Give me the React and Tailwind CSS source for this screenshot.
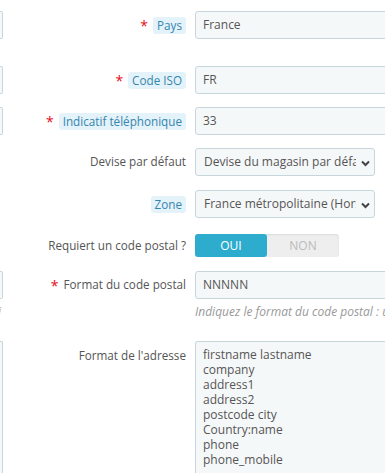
import React from 'react'

const font = { fontFamily: '"Open Sans", "Noto Sans", sans-serif' }

const Stub = ({ tall }) => (
  <div
    className={`w-[3px] shrink-0 self-start border-y border-r border-[#c7d6db] bg-[#f5f8f9] rounded-r-[2px] ${
      tall ? 'h-[200px] border-b-0' : 'h-[28px]'
    }`}
  />
)

const Label = ({ children, required, hint }) => (
  <div className="w-[183px] shrink-0 flex justify-end items-center gap-[5px] text-[11.7px] text-[#555]">
    {required && <span className="text-[#e50b1b] text-[14px] leading-none mt-[2px]">*</span>}
    {hint ? (
      <span className="bg-[#e4f2fa] text-[#3586ae] rounded-[3px] px-[4px] leading-[17px]">{children}</span>
    ) : (
      <span>{children}</span>
    )}
  </div>
)

const Chevron = () => (
  <svg width="9" height="7" viewBox="0 0 9 7" className="absolute right-[4px] top-[11px]">
    <path d="M1 1.5 L4.5 5 L8 1.5" fill="none" stroke="#444" strokeWidth="2" />
  </svg>
)

const TextInput = ({ value }) => (
  <div className="ml-[9px] w-[210px] h-[28px] shrink-0 border border-[#c7d6db] bg-[#f5f8f9] rounded-[3px] pl-[7px] flex items-center text-[12px] text-[#555]">
    {value}
  </div>
)

const Select = ({ value }) => (
  <div className="relative ml-[9px] w-[180px] h-[28px] shrink-0 border border-[#c7d6db] bg-[#f5f8f9] rounded-[3px] pl-[8px] pr-[18px] flex items-center text-[12px] text-[#555]">
    <span className="block overflow-hidden whitespace-nowrap w-full">{value}</span>
    <Chevron />
  </div>
)

export default function App() {
  const addressLines = [
    'firstname lastname',
    'company',
    'address1',
    'address2',
    'postcode city',
    'Country:name',
    'phone',
    'phone_mobile',
  ]

  return (
    <div className="w-[385px] h-[473px] overflow-hidden bg-white" style={font}>
      <div className="pt-[11px]">
        <div className="flex h-[28px] items-center">
          <Stub />
          <Label required hint>Pays</Label>
          <TextInput value="France" />
        </div>

        <div className="flex h-[28px] items-center mt-[27px]">
          <Stub />
          <Label required hint>Code ISO</Label>
          <TextInput value="FR" />
        </div>

        <div className="flex h-[28px] items-center mt-[13px]">
          <Stub />
          <Label required hint>Indicatif téléphonique</Label>
          <TextInput value="33" />
        </div>

        <div className="flex h-[28px] items-center mt-[13px]">
          <div className="w-[3px] shrink-0" />
          <Label>Devise par défaut</Label>
          <Select value="Devise du magasin par défaut" />
        </div>

        <div className="flex h-[28px] items-center mt-[14px]">
          <div className="w-[3px] shrink-0" />
          <Label hint>Zone</Label>
          <Select value="France métropolitaine (Hors DOM-TOM)" />
        </div>

        <div className="flex h-[23px] items-center mt-[16px]">
          <div className="w-[3px] shrink-0" />
          <Label>Requiert un code postal ?</Label>
          <div className="ml-[9px] flex h-[23px] w-[144px] rounded-[3px] bg-[#eeeeee] shadow-[inset_0_1px_2px_rgba(0,0,0,0.08)] text-[12px]">
            <div className="w-[72px] flex items-center justify-center bg-[#2eacce] text-white rounded-[3px]">OUI</div>
            <div className="w-[72px] flex items-center justify-center text-[#bbbbbb]">NON</div>
          </div>
        </div>

        <div className="flex h-[28px] items-center mt-[14px]">
          <Stub />
          <Label required>Format du code postal</Label>
          <TextInput value="NNNNN" />
        </div>

        <div className="flex mt-[4px] text-[12px] italic text-[#999] whitespace-nowrap">
          <div className="w-[3px] shrink-0 overflow-hidden text-[#c9a26b]">
            <span className="-ml-[2px]">i</span>
          </div>
          <div className="w-[183px] shrink-0" />
          <div className="ml-[9px]">Indiquez le format du code postal : utilisez L pour une lettre</div>
        </div>

        <div className="flex mt-[20px]">
          <Stub tall />
          <div className="w-[183px] shrink-0 flex justify-end pt-[6px] text-[11.7px] text-[#555]">
            Format de l'adresse
          </div>
          <div className="ml-[9px] w-[210px] h-[200px] shrink-0 border border-[#c7d6db] border-b-0 bg-[#f5f8f9] rounded-t-[3px] pl-[7px] pt-[5px] text-[12px] leading-[15px] text-[#555]">
            {addressLines.map((line) => (
              <div key={line}>{line}</div>
            ))}
          </div>
        </div>
      </div>
    </div>
  )
}
